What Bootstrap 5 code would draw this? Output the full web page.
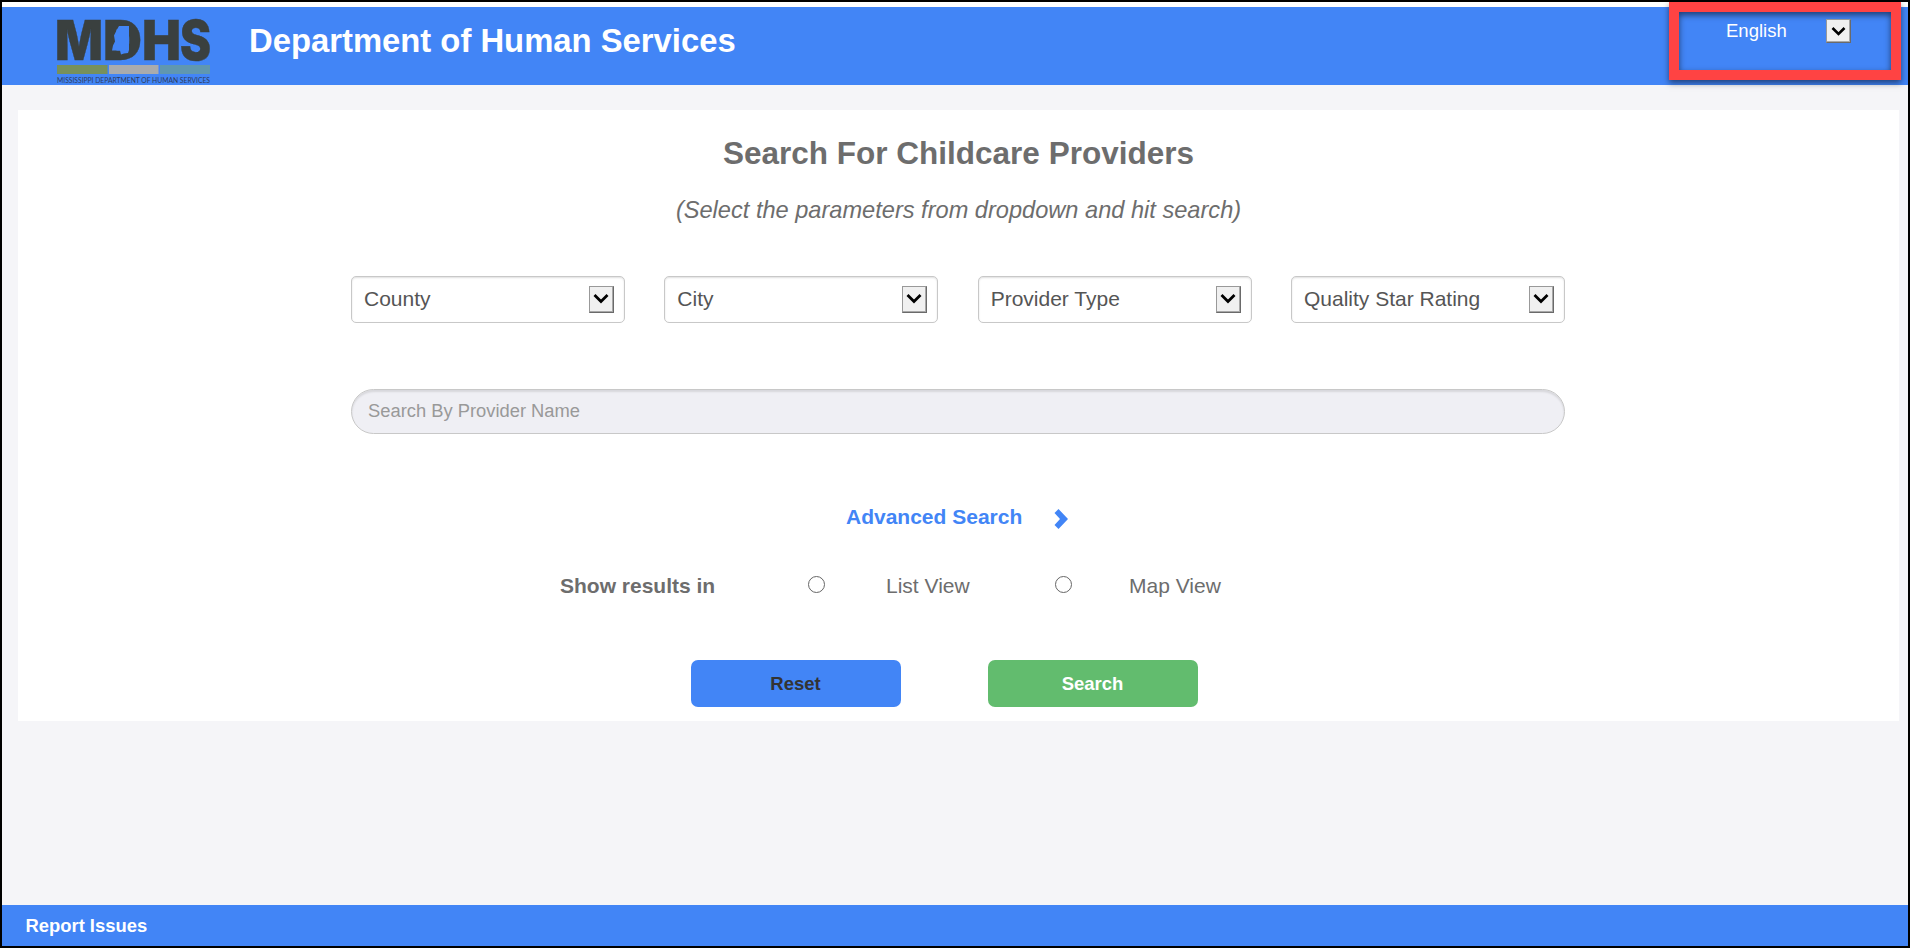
<!DOCTYPE html>
<html lang="en">
<head>
<meta charset="utf-8">
<meta name="viewport" content="width=device-width, initial-scale=1">
<title>Department of Human Services</title>
<link href="https://cdn.jsdelivr.net/npm/bootstrap@5.3.0/dist/css/bootstrap.min.css" rel="stylesheet">
<style>
  body { font-family: "Liberation Sans", Arial, sans-serif; color: #6d6d6d; background: #f5f5f8; }
  .shell { height: 948px; border: 2px solid #000; overflow: hidden; }
  .topbar { height: 83px; border-top: 5px solid #fff; background: #4285f6; padding-left: 53px; }
  .logo { width: 158px; height: 78px; overflow: visible; }
  .brand-title { font-size: 32.8px; line-height: 40px; margin: 14px 0 0 36px; color: #fff; }
  .lang { width: 232px; height: 78px; margin: -5px 7px 0 0; border: 10px solid #ff4343;
          box-shadow: 0 3px 6px rgba(0,0,0,.5), inset 0 3px 6px rgba(0,0,0,.55); padding: 7px 40px 0 47px; position: relative; }
  .lang span { font-size: 18.5px; line-height: 24px; color: #fff; }
  .arrow { width: 25px; height: 27px; background: #f0f0f0; border: 1px solid; border-color: #999 #6a6a6a #6a6a6a #999; box-shadow: inset -1px -1px #a8a8a8; padding: 0; }
  .arrow svg { display: block; margin: auto; }
  .lang .arrow { height: 24px; }
  .panel { margin: 25px 9px 0 16px; height: 611px; background: #fff; padding-top: 23px; }
  .panel h1 { font-size: 31.5px; line-height: 40px; margin: 0 0 22px; }
  .hint { font-size: 23.6px; line-height: 30px; margin: 0 0 51px; }
  .fields { width: 1214px; margin-left: 333px; }
  .filters { display: grid; grid-template-columns: repeat(4, 274px); justify-content: space-between; margin-bottom: 66px; }
  .filter { height: 47px; border: 1px solid #c8c8c8; border-radius: 5px; box-shadow: inset 0 1px 2px rgba(0,0,0,.13);
            padding: 0 10px 0 12px; font-size: 21px; color: #555; }
  .filter span { line-height: 30px; margin-top: -1px; }
  .name-box, .name-box:focus { height: 45px; border: 1px solid #c8c8c8; border-radius: 23px; background: #efeff4;
              box-shadow: inset 0 2px 2px rgba(0,0,0,.1); font-size: 18.35px; padding: 0 16px 2px; }
  .name-box::placeholder { color: #999; }
  .advanced { margin: 68px 0 39px 495px; color: #4285f6; font-size: 21px; line-height: 30px; height: 30px; }
  .advanced svg { margin: 7px 0 0 32px; }
  .views { margin-left: 209px; font-size: 21px; line-height: 30px; height: 30px;
           display: grid; grid-template-columns: 248px 78px 169px 74px auto; }
  .dot { appearance: none; width: 17px; height: 17px; border: 1px solid #666; border-radius: 50%; background: #fff; margin: 5px 0 0; }
  .actions { margin: 59px 0 0 339.5px; gap: 87px; }
  .act { width: 210px; height: 47px; border: 0; border-radius: 7px; font-size: 18.5px; font-weight: 700; padding: 1px 0 0; }
  .act-reset, .act-reset:hover { background: #4285f6; color: #333; }
  .act-search, .act-search:hover { background: #62bc6e; color: #fff; }
  .bottombar { height: 41px; background: #4285f6; }
  .bottombar a { font-size: 18.4px; line-height: 41px; margin-left: 23.500px; color: #fff; }
</style>
</head>
<body>
<div class="shell d-flex flex-column">
  <header class="topbar d-flex align-items-start flex-shrink-0">
    <svg class="logo flex-shrink-0" viewBox="55 7 158 78" aria-label="MDHS">
      <g fill="#3a403f" stroke="#3a403f" stroke-width=".4" font-family="Inter, sans-serif" font-weight="900" font-size="54.500">
        <text y="59.700"><tspan x="55" textLength="48" lengthAdjust="spacingAndGlyphs">M</tspan><tspan x="103" textLength="39" lengthAdjust="spacingAndGlyphs">D</tspan><tspan x="142" textLength="39" lengthAdjust="spacingAndGlyphs">H</tspan><tspan x="180" textLength="31" lengthAdjust="spacingAndGlyphs">S</tspan></text>
      </g>
      <path d="M119 26h10v24l-1 3-4 .5-3 1-1-4h-8l1-5 2-4-1-6 3-6z" fill="#4285f6"/>
      <path d="M57 65h50.500v9H57z" fill="#77905c"/>
      <path d="M109 65h49.500v9H109z" fill="#a9abad"/>
      <path d="M160 65h50v9h-50z" fill="#6097b0"/>
      <text x="57" y="82.500" textLength="153" lengthAdjust="spacingAndGlyphs" font-family="Lato, sans-serif" font-size="6.800" fill="#2f3b5a">MISSISSIPPI DEPARTMENT OF HUMAN SERVICES</text>
    </svg>
    <div class="brand-title fw-bold text-nowrap">Department of Human Services</div>
    <div class="lang ms-auto d-flex justify-content-between align-items-start">
      <span>English</span>
      <button class="arrow" aria-label="Language"><svg width="15" height="11" viewBox="0 0 15 11"><path d="M1.500 2l6 6 6-6" fill="none" stroke="#000" stroke-width="2.600"/></svg></button>
    </div>
  </header>

  <main class="panel flex-shrink-0">
    <h1 class="text-center fw-bold">Search For Childcare Providers</h1>
    <p class="hint text-center fst-italic">(Select the parameters from dropdown and hit search)</p>
    <form class="fields">
      <div class="filters">
        <div class="filter d-flex align-items-center justify-content-between"><span>County</span><button type="button" class="arrow" aria-label="County"><svg width="17" height="13" viewBox="0 0 17 13"><path d="M1.500 2l6.500 6.500 6.500-6.500" fill="none" stroke="#000" stroke-width="2.800"/></svg></button></div>
        <div class="filter d-flex align-items-center justify-content-between"><span>City</span><button type="button" class="arrow" aria-label="City"><svg width="17" height="13" viewBox="0 0 17 13"><path d="M1.500 2l6.500 6.500 6.500-6.500" fill="none" stroke="#000" stroke-width="2.800"/></svg></button></div>
        <div class="filter d-flex align-items-center justify-content-between"><span>Provider Type</span><button type="button" class="arrow" aria-label="Provider type"><svg width="17" height="13" viewBox="0 0 17 13"><path d="M1.500 2l6.500 6.500 6.500-6.500" fill="none" stroke="#000" stroke-width="2.800"/></svg></button></div>
        <div class="filter d-flex align-items-center justify-content-between"><span>Quality Star Rating</span><button type="button" class="arrow" aria-label="Rating"><svg width="17" height="13" viewBox="0 0 17 13"><path d="M1.500 2l6.500 6.500 6.500-6.500" fill="none" stroke="#000" stroke-width="2.800"/></svg></button></div>
      </div>
      <input class="name-box form-control" type="text" placeholder="Search By Provider Name">
      <div class="advanced d-flex align-items-start fw-bold">
        <span>Advanced Search</span>
        <svg width="15" height="20" viewBox="0 0 15 20"><path d="M0.500 4L4.500 0 14 10 4.500 20 0.500 16 6 10z" fill="#4285f6"/></svg>
      </div>
      <div class="views">
        <strong>Show results in</strong>
        <input class="dot" type="radio" name="view" id="list"><label for="list">List View</label>
        <input class="dot" type="radio" name="view" id="map"><label for="map">Map View</label>
      </div>
      <div class="actions d-flex">
        <button type="reset" class="act act-reset btn">Reset</button>
        <button type="button" class="act act-search btn">Search</button>
      </div>
    </form>
  </main>

  <footer class="bottombar mt-auto flex-shrink-0">
    <a class="fw-bold text-decoration-none d-inline-block" href="#">Report Issues</a>
  </footer>
</div>
<script src="https://cdn.jsdelivr.net/npm/bootstrap@5.3.0/dist/js/bootstrap.bundle.min.js"></script>
</body>
</html>
